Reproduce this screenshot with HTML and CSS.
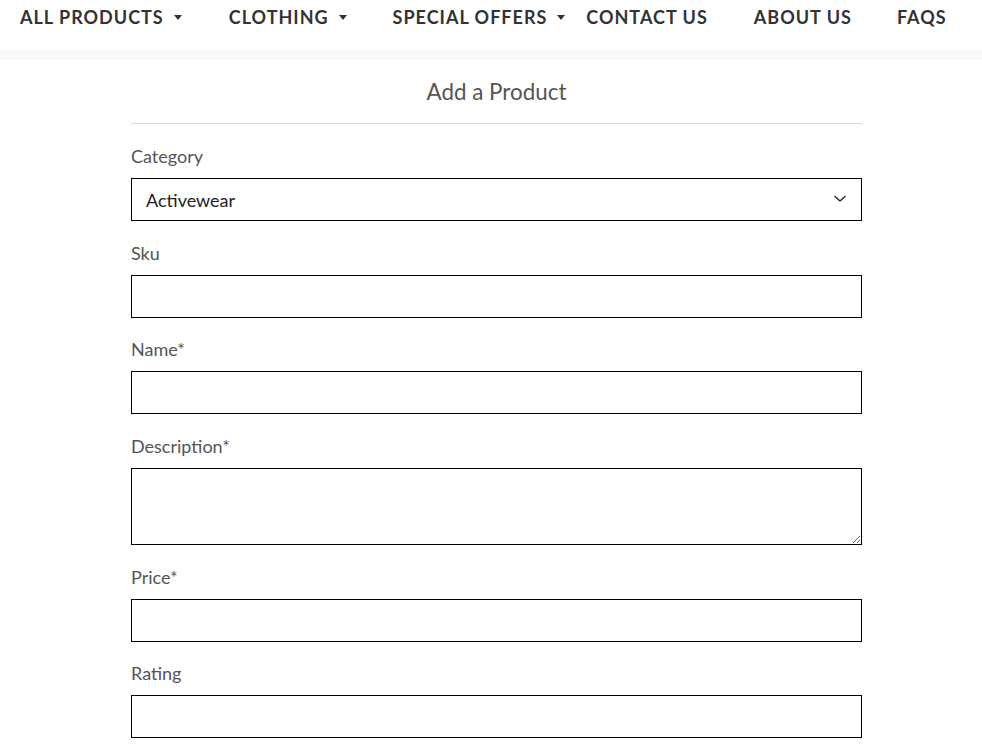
FILE: index.html
```html
<!DOCTYPE html>
<html lang="en">
<head>
<meta charset="utf-8">
<title>Add a Product</title>
<link rel="stylesheet" href="styles.css">
</head>
<body>
<header class="topbar">
  <nav class="nav">
    <a class="nav-item nav-all" href="#">ALL PRODUCTS<span class="caret"></span></a>
    <a class="nav-item nav-clothing" href="#">CLOTHING<span class="caret"></span></a>
    <a class="nav-item nav-offers" href="#">SPECIAL OFFERS<span class="caret"></span></a>
    <a class="nav-item nav-contact" href="#">CONTACT US</a>
    <a class="nav-item nav-about" href="#">ABOUT US</a>
    <a class="nav-item nav-faqs" href="#">FAQS</a>
  </nav>
  <div class="subbar"></div>
</header>
<main class="container">
  <h2 class="title">Add a Product</h2>
  <hr class="rule">
  <form class="form">
    <div class="group">
      <label class="label" for="category">Category</label>
      <div class="select-wrap">
        <select class="control select" id="category">
          <option>Activewear</option>
        </select>
        <svg class="chevron" width="12" height="8" viewBox="0 0 12 8" aria-hidden="true"><path d="M1 1.5 L6 6 L11 1.5" fill="none" stroke="#333" stroke-width="1.6" stroke-linecap="round" stroke-linejoin="round"/></svg>
      </div>
    </div>
    <div class="group">
      <label class="label" for="sku">Sku</label>
      <input class="control" id="sku" type="text">
    </div>
    <div class="group">
      <label class="label" for="name">Name*</label>
      <input class="control" id="name" type="text">
    </div>
    <div class="group">
      <label class="label" for="desc">Description*</label>
      <textarea class="control area" id="desc"></textarea>
    </div>
    <div class="group">
      <label class="label" for="price">Price*</label>
      <input class="control" id="price" type="text">
    </div>
    <div class="group">
      <label class="label" for="rating">Rating</label>
      <input class="control" id="rating" type="text">
    </div>
  </form>
</main>
</body>
</html>
```
FILE: styles.css
```css
* { box-sizing: border-box; }
html, body { margin: 0; padding: 0; background: #fff; }
body {
  font-family: Lato, "Open Sans", sans-serif;
  color: #555;
  overflow: hidden;
}
.topbar { background: #fff; }
.nav {
  display: flex;
  align-items: center;
  height: 49px;
  padding-bottom: 15px;
  padding-left: 20px;
}
.nav-item {
  font-weight: 700;
  font-size: 18px;
  color: #333;
  text-decoration: none;
  letter-spacing: 1px;
  white-space: nowrap;
  display: flex;
  align-items: center;
}
.caret {
  display: inline-block;
  width: 0; height: 0;
  border-left: 4.5px solid transparent;
  border-right: 4.5px solid transparent;
  border-top: 5px solid #333;
  margin-left: 10px;
  margin-top: 1px;
}
.nav-all { margin-right: 47px; }
.nav-clothing { margin-right: 46px; }
.nav-offers { margin-right: 21px; }
.nav-contact { margin-right: 46px; }
.nav-about { margin-right: 45px; }
.subbar {
  height: 9px;
  background: #f8f9fa;
  box-shadow: 0 1px 2px rgba(0,0,0,0.06);
}
.container {
  width: 731px;
  margin-left: 131px;
}
.title {
  font-weight: 400;
  font-size: 22.4px;
  text-align: center;
  color: #555;
  margin: 17px 0 0;
  line-height: 34px;
}
.rule {
  border: 0;
  border-top: 1px solid #d9d9d9;
  margin: 14px 0 0;
}
.form { padding-top: 19px; }
.group { margin-bottom: 18.7px; }
.label {
  display: block;
  font-size: 18px;
  line-height: 26px;
  margin-bottom: 9px;
  color: #555;
}
.control {
  display: block;
  width: 100%;
  height: 43px;
  border: 1px solid #000;
  border-radius: 0;
  background: #fff;
  font-family: Lato, sans-serif;
  font-size: 18px;
  color: #222;
  padding: 0 14px;
}
.select-wrap { position: relative; }
.select {
  appearance: none;
  -webkit-appearance: none;
  padding: 0 14px;
}
.chevron {
  position: absolute;
  right: 16px;
  top: 17px;
  pointer-events: none;
}
.area { height: 77px; resize: vertical; padding: 8px 14px; }
```
